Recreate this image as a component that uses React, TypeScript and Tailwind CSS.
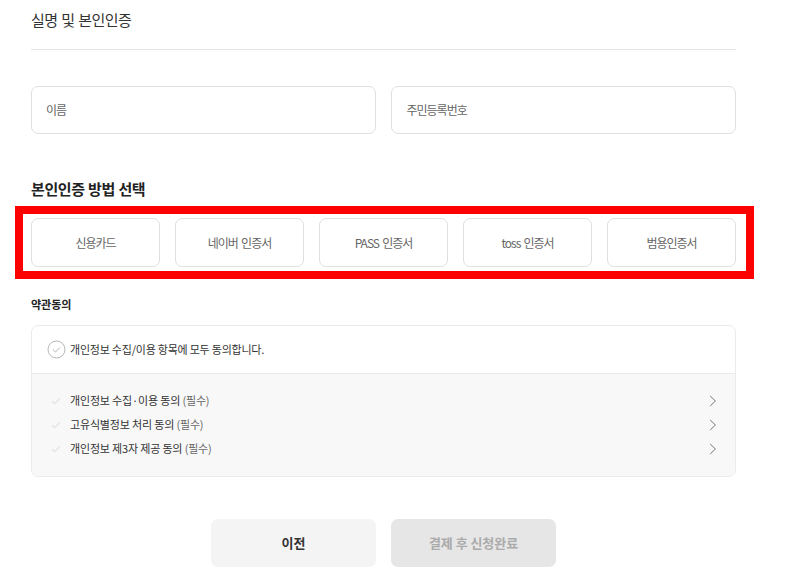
import React from "react";

const font = { fontFamily: '"Noto Sans CJK KR", "Noto Sans", sans-serif' };
const methods = ["신용카드", "네이버 인증서", "PASS 인증서", "toss 인증서", "범용인증서"];
const terms = ["개인정보 수집·이용 동의", "고유식별정보 처리 동의", "개인정보 제3자 제공 동의"];

export default function App() {
  return (
    <div style={font} className="w-[795px] h-[579px] overflow-hidden bg-white pl-[31px] pr-[59px] text-[#222]">
      <h1 className="h-[50px] pt-[9px] border-b border-[#e5e5e5] text-[15px] leading-[21px] font-normal tracking-[-0.55px] [word-spacing:1px] text-[#333]">실명 및 본인인증</h1>
      <div className="mt-[36px] flex gap-[15px]">
        <div className="flex-1 h-[48px] rounded-[7px] border border-[#e0e0e0] pl-[14px] flex items-center text-[12px] text-[#666] tracking-[-1px]">이름</div>
        <div className="flex-1 h-[48px] rounded-[7px] border border-[#e0e0e0] pl-[15px] flex items-center text-[12px] text-[#666] tracking-[-1px]">주민등록번호</div>
      </div>
      <h2 className="mt-[44px] text-[15px] leading-[22px] font-bold tracking-[-0.4px] [word-spacing:0.5px] text-[#222]">본인인증 방법 선택</h2>
      <div className="mt-[6px] -ml-[16px] -mr-[18px] border-[8px] border-[#ff0000] px-[8px] py-[4px] flex gap-[15px] w-[739px]">
        {methods.map((m) => (
          <div key={m} className="w-[129px] h-[49px] rounded-[7px] border border-[#e0e0e0] flex items-center justify-center text-[12px] text-[#666] tracking-[-1px] [word-spacing:1.5px]">{m}</div>
        ))}
      </div>
      <h3 className="mt-[16px] text-[11px] leading-[18px] font-bold text-[#222]">약관동의</h3>
      <div className="mt-[12px] h-[152px] rounded-[7px] border border-[#ebebeb] overflow-hidden">
        <div className="h-[48px] border-b border-[#ebebeb] flex items-center pl-[15px] gap-[4px]">
          <svg width="19" height="19" viewBox="0 0 19 19" fill="none">
            <circle cx="9.5" cy="9.5" r="8.5" stroke="#b5b5b5" />
            <path d="M6 9.6l2.5 2.4L13 7.4" stroke="#b5b5b5" />
          </svg>
          <span className="text-[11px] tracking-[-0.22px] text-[#333]">개인정보 수집/이용 항목에 모두 동의합니다.</span>
        </div>
        <div className="h-[103px] bg-[#f8f8f8] pt-[15px] pl-[19px] pr-[18px] flex flex-col">
          {terms.map((t) => (
            <div key={t} className="h-[24px] flex items-center">
              <svg width="10" height="10" viewBox="0 0 10 10" fill="none">
                <path d="M1 5.2l2.6 2.4L8.8 2.6" stroke="#d4d4d4" />
              </svg>
              <span className="ml-[9px] pb-[2px] text-[11px] tracking-[-0.17px] text-[#333]">{t} <span className="text-[#666]">(필수)</span></span>
              <svg className="ml-auto" width="8" height="12" viewBox="0 0 8 12" fill="none">
                <path d="M1.2 1l5.2 5-5.2 5" stroke="#777" />
              </svg>
            </div>
          ))}
        </div>
      </div>
      <div className="mt-[42px] ml-[180px] flex gap-[15px]">
        <div className="w-[165px] h-[48px] rounded-[7px] bg-[#f4f4f4] flex items-center justify-center text-[13px] font-bold text-[#333]">이전</div>
        <div className="w-[165px] h-[48px] rounded-[7px] bg-[#e6e6e6] flex items-center justify-center text-[13px] font-bold text-[#aaa] tracking-[-0.05px]">결제 후 신청완료</div>
      </div>
    </div>
  );
}
